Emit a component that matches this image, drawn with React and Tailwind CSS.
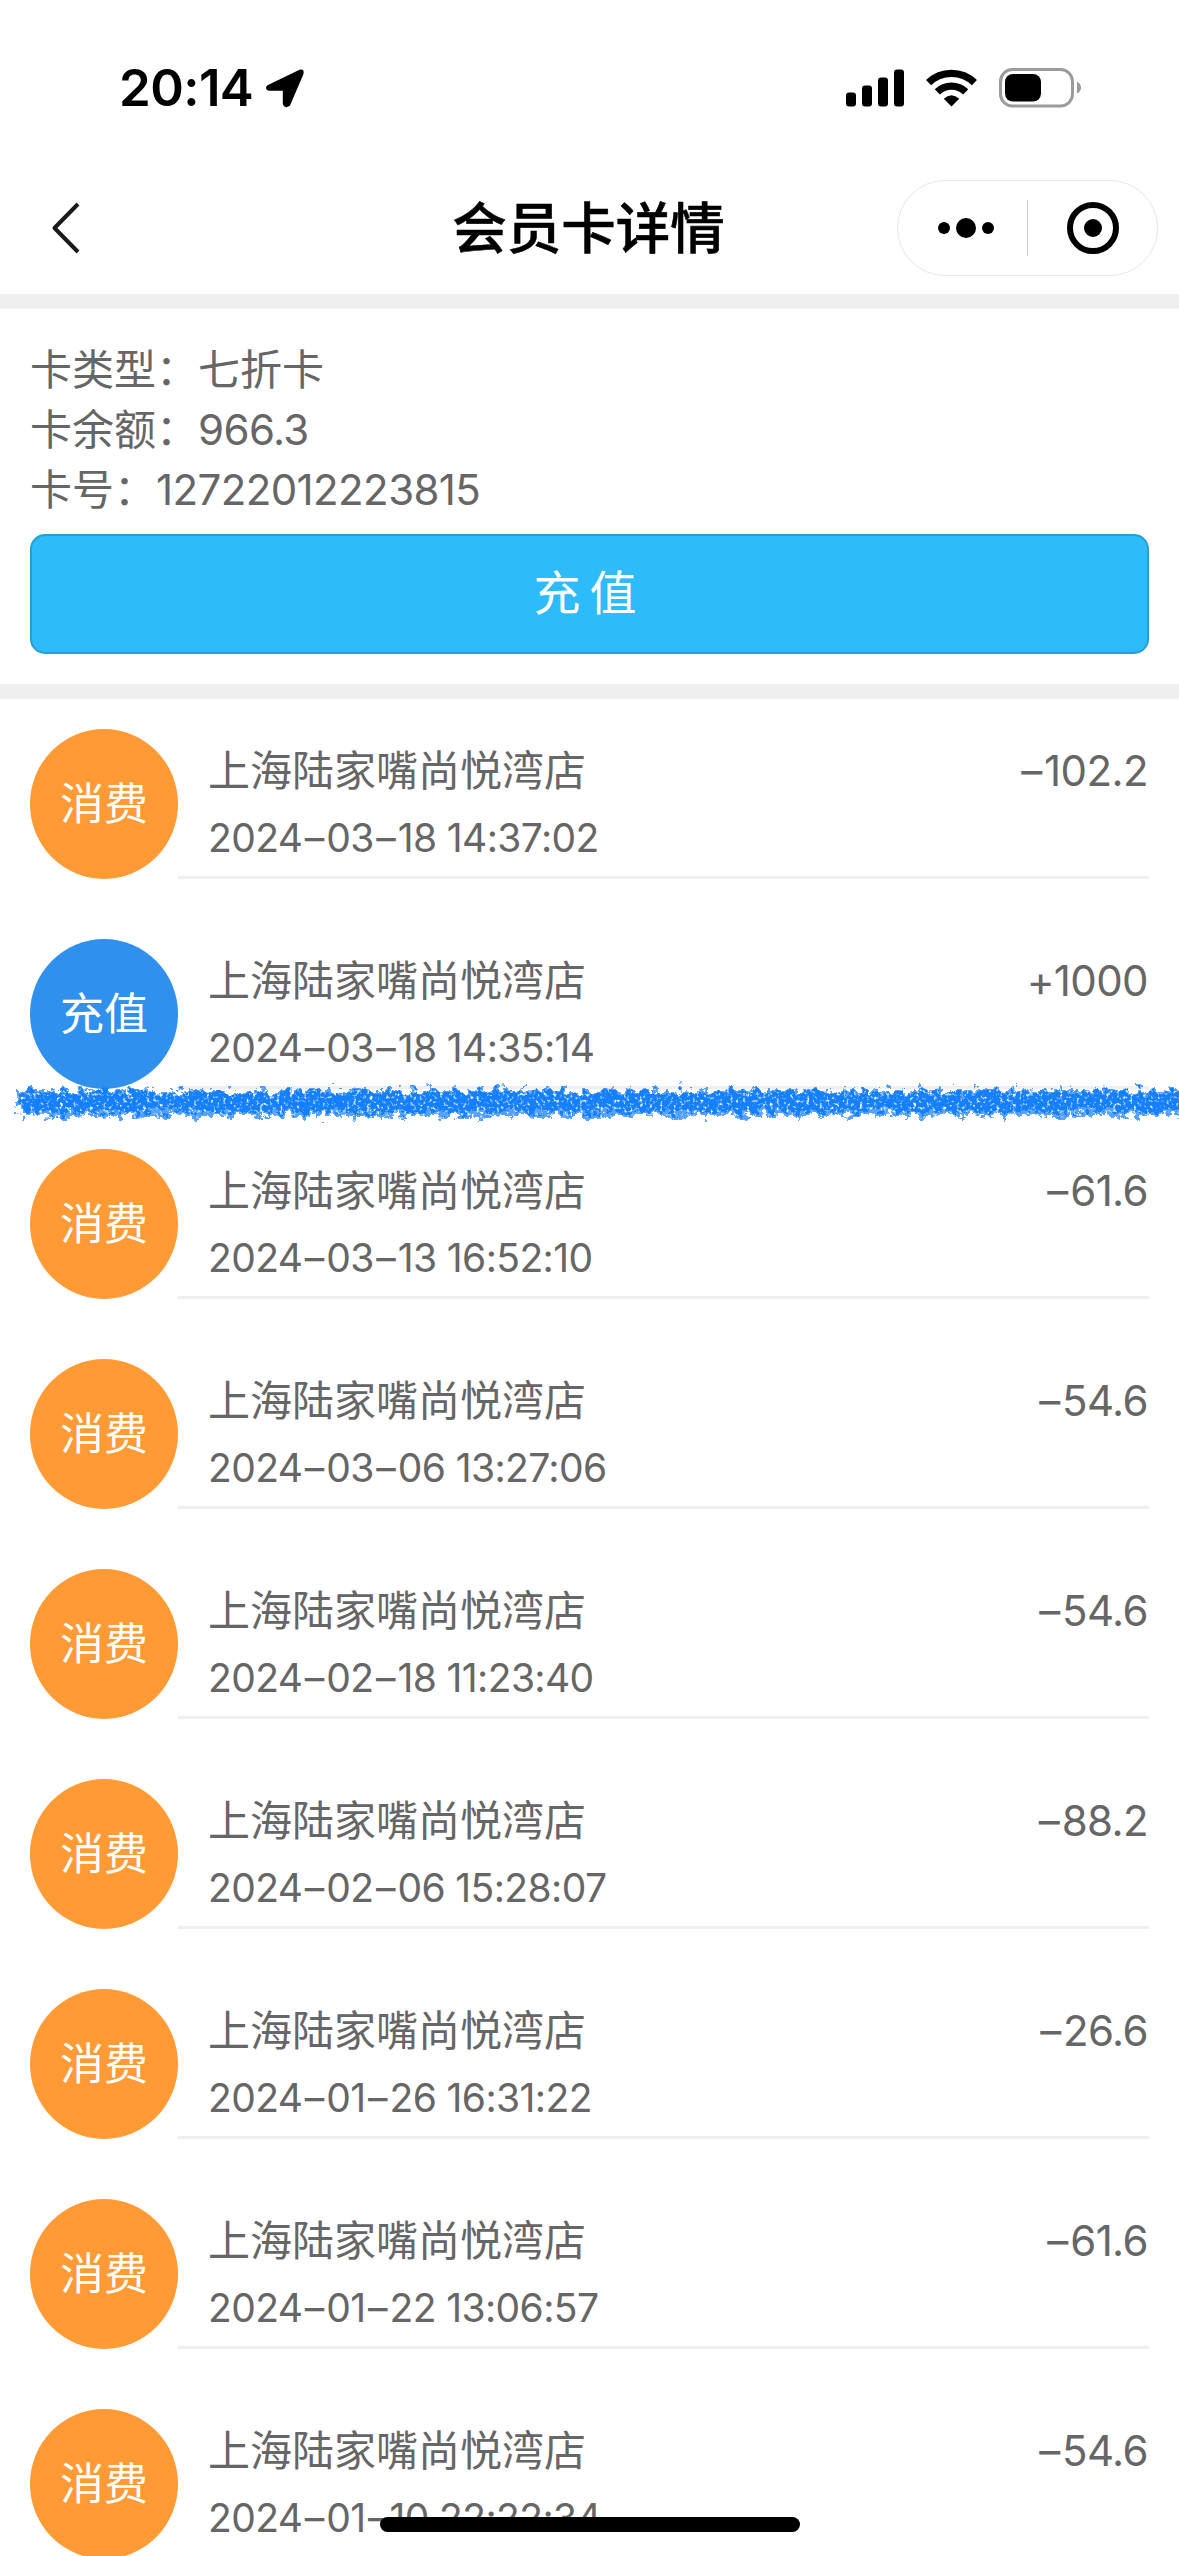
import React from "react";

const records = [
  { type: "消费", time: "2024–03–18 14:37:02", amount: "–102.2" },
  { type: "充值", time: "2024–03–18 14:35:14", amount: "+1000" },
  { type: "消费", time: "2024–03–13 16:52:10", amount: "–61.6" },
  { type: "消费", time: "2024–03–06 13:27:06", amount: "–54.6" },
  { type: "消费", time: "2024–02–18 11:23:40", amount: "–54.6" },
  { type: "消费", time: "2024–02–06 15:28:07", amount: "–88.2" },
  { type: "消费", time: "2024–01–26 16:31:22", amount: "–26.6" },
  { type: "消费", time: "2024–01–22 13:06:57", amount: "–61.6" },
  { type: "消费", time: "2024–01–10 22:22:34", amount: "–54.6" },
];

function StatusBar() {
  return (
    <div className="flex h-[176px] items-center justify-between pl-[119px] pr-[97px]">
      <div className="flex items-center">
        <span className="w-[146px] whitespace-nowrap text-[51px] leading-[60px] font-semibold tracking-[-0.6px]">20:14</span>
        <svg width="40" height="40" viewBox="0 0 40 40">
          <path d="M3.5 18 L35 2.8 Q38.5 2 37.2 6 L24 36.8 Q20.5 39.5 19 36 V21.5 H4 Q0.5 20.5 3.5 18Z" fill="#000" stroke="#000" strokeWidth="2.4" strokeLinejoin="round" />
        </svg>
      </div>
      <div className="flex items-center">
        <svg width="58" height="38" viewBox="0 0 58 38" className="mr-[22px]">
          <rect x="0" y="23.5" width="10" height="14" rx="3" />
          <rect x="16" y="16.5" width="10" height="21" rx="3" />
          <rect x="32" y="8.5" width="10" height="29" rx="3" />
          <rect x="48" y="0.5" width="10" height="37" rx="3" />
        </svg>
        <svg width="51" height="38" viewBox="0 0 51 38" className="mr-[22px]">
          <g fill="none" stroke="#000" strokeWidth="7.4">
            <path d="M2.6 13.6 A33 33 0 0 1 48.4 13.6" />
            <path d="M11.3 22.8 A20.5 20.5 0 0 1 39.7 22.8" />
          </g>
          <path d="M25.5 37.6 L17.8 29.7 Q25.5 22.7 33.2 29.7Z" />
        </svg>
        <svg width="83" height="40" viewBox="0 0 83 40">
          <rect x="1.5" y="1.5" width="72" height="36.5" rx="12" fill="none" stroke="#9b9b9b" strokeWidth="3" />
          <rect x="6" y="6" width="36" height="27.5" rx="8" />
          <path d="M78 13.5 Q82 15.5 82 19.5 Q82 23.5 78 25.5Z" fill="#9b9b9b" />
        </svg>
      </div>
    </div>
  );
}

function NavBar() {
  return (
    <div className="grid h-[118px] grid-cols-[282px_1fr_282px] items-start pt-1">
      <svg width="30" height="52" viewBox="0 0 30 52" className="mt-[22px] ml-[51px]">
        <path d="M27 2 L3.5 26 L27 50" fill="none" stroke="#1a1a1a" strokeWidth="4" strokeLinejoin="round" />
      </svg>
      <h1 className="mt-[13px] mr-[2px] text-center text-[54.5px] leading-[70px] font-medium [-webkit-text-stroke:0.6px_#000]">会员卡详情</h1>
      <div className="flex h-24 w-[261px] items-center rounded-full border border-[#e6e6e6]">
        <div className="flex w-[129px] items-center justify-center gap-[6px] pl-[7px]">
          <span className="size-3 rounded-full bg-black" />
          <span className="size-5 rounded-full bg-black" />
          <span className="size-3 rounded-full bg-black" />
        </div>
        <div className="h-14 w-px bg-[#cccccc]" />
        <div className="flex flex-1 justify-center">
          <div className="flex size-[52px] items-center justify-center rounded-full border-[6px] border-black">
            <span className="size-[18px] rounded-full bg-black" />
          </div>
        </div>
      </div>
    </div>
  );
}

/* Hand-drawn crayon stroke laid over the divider */
function CrayonStroke() {
  return (
    <svg width="1169" height="46" viewBox="0 0 1169 46" className="absolute top-[141px] left-[10px]">
      <defs>
        <filter id="crayon" x="0" y="0" width="1169" height="46" filterUnits="userSpaceOnUse" colorInterpolationFilters="sRGB">
          <feTurbulence type="fractalNoise" baseFrequency="0.12" numOctaves="4" seed="8" result="edge" />
          <feDisplacementMap in="SourceGraphic" in2="edge" scale="22" xChannelSelector="R" yChannelSelector="G" result="rough" />
          <feTurbulence type="fractalNoise" baseFrequency="0.3" numOctaves="2" seed="3" result="grain" />
          <feColorMatrix in="grain" type="matrix" values="0 0 0 0 0  0 0 0 0 0  0 0 0 0 0  4 0 0 0 -0.75" result="mask" />
          <feComposite in="rough" in2="mask" operator="in" result="grained" />
          <feGaussianBlur in="grained" stdDeviation="0.7" />
        </filter>
      </defs>
      <g filter="url(#crayon)">
        <rect x="7" y="10" width="1190" height="26" fill="#1c82fc" opacity="0.75" />
        <rect x="9" y="12" width="1190" height="20" fill="#1580ff" />
      </g>
    </svg>
  );
}

/* Figures with a little air around each dash */
function Figures({ text }) {
  return (
    <span className="tracking-[-0.6px]">
      {text.split("–").map((part, i) => (
        <React.Fragment key={i}>
          {i > 0 && <span className="px-[2.5px]">–</span>}
          {part}
        </React.Fragment>
      ))}
    </span>
  );
}

function Record({ type, time, amount }) {
  const topUp = type === "充值";
  return (
    <li className="flex h-[150px]">
      <div className={"flex h-[150px] w-[148px] shrink-0 items-center justify-center rounded-[50%] text-[44px] text-white " + (topUp ? "bg-[#2f91ed]" : "bg-[#ff9a34]")}>
        {type}
      </div>
      <div className="flex flex-1 justify-between border-b-[3px] border-[#efefef] pt-[10px] pl-[30px]">
        <div className="whitespace-nowrap">
          <div className="text-[42px] leading-[63px]">上海陆家嘴尚悦湾店</div>
          <div className="text-[39px] leading-[71px]"><Figures text={time} /></div>
        </div>
        <div className="pr-px text-[42px] leading-[63px]"><Figures text={amount} /></div>
      </div>
    </li>
  );
}

export default function App() {
  return (
    <div className="relative h-[2556px] w-[1179px] overflow-hidden bg-white font-['Inter','Noto_Sans_CJK_SC',sans-serif] text-black">
      <header>
        <StatusBar />
        <NavBar />
      </header>
      <main className="text-[#666666] [font-feature-settings:'calt'_0]">
        <section className="h-[405px] border-y-[15px] border-[#efefef] px-[30px] pt-[31px]">
          <div className="text-[42px] leading-[60px]">
            <p>卡类型：七折卡</p>
            <p>卡余额：<Figures text="966.3" /></p>
            <p>卡号：<Figures text="12722012223815" /></p>
          </div>
          <button className="mt-[14px] h-[120px] w-full rounded-[15px] border-2 border-[#259fd2] bg-[#2dbbf9] pr-[9px] pb-[2px] text-[47px] text-white [word-spacing:-4px]">充 值</button>
        </section>
        <ul className="relative flex flex-col gap-[60px] px-[30px] pt-[30px]">
          {records.map((r) => (
            <Record key={r.time} {...r} />
          ))}
          <li className="absolute top-[240px] left-0" aria-hidden="true">
            <CrayonStroke />
          </li>
        </ul>
      </main>
      <div className="absolute top-[2517px] left-[380px] h-[15px] w-[420px] rounded-full bg-black" />
    </div>
  );
}
